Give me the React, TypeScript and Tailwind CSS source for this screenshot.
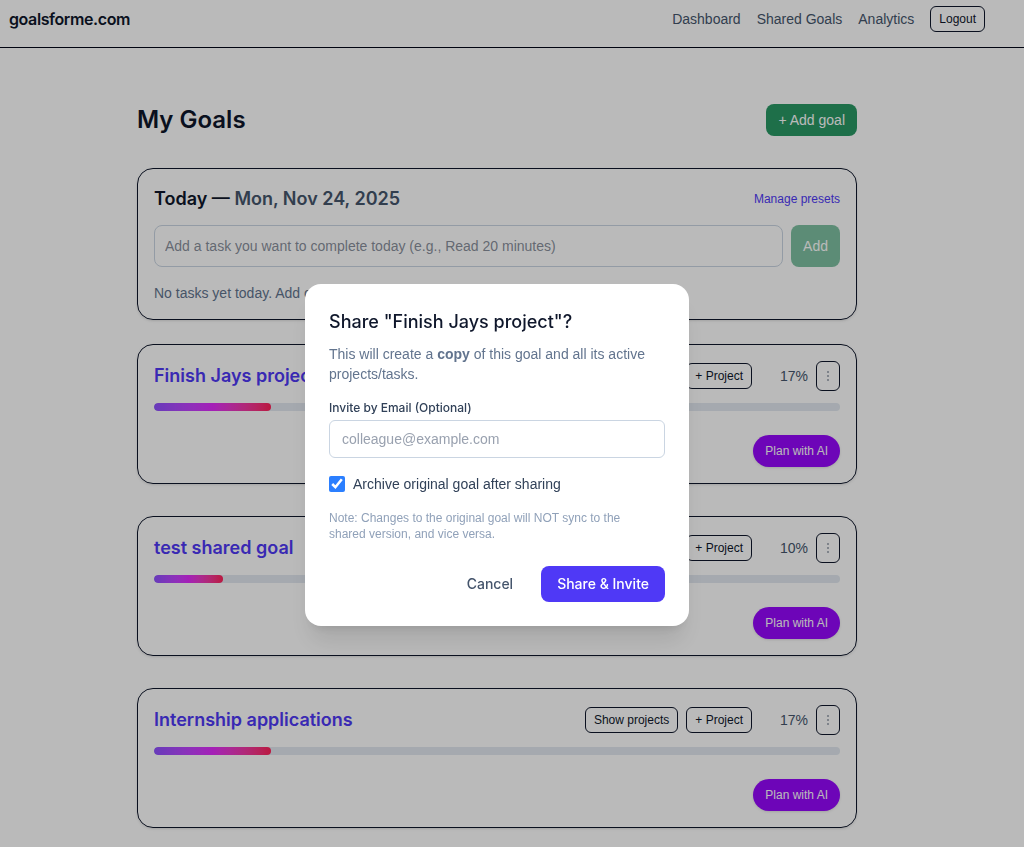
type Goal = { title: string; percent: number };

const goals: Goal[] = [
  { title: "Finish Jays project", percent: 17 },
  { title: "test shared goal", percent: 10 },
  { title: "Internship applications", percent: 17 },
];

function SiteHeader() {
  return (
    <header className="flex items-center justify-between border-b border-slate-950 pt-1.5 pr-[39px] pb-[15px] pl-[9px]">
      <a href="#" className="font-['Inter',sans-serif] text-base leading-6 font-semibold tracking-tight">
        goalsforme.com
      </a>
      <nav className="flex items-center gap-4 text-sm text-slate-600">
        <a href="#">Dashboard</a>
        <a href="#">Shared Goals</a>
        <a href="#">Analytics</a>
        <button type="button" className="rounded-md border border-slate-900 px-2 py-1 text-xs text-slate-900">
          Logout
        </button>
      </nav>
    </header>
  );
}

function TodayCard() {
  return (
    <section className="rounded-2xl border border-slate-900 p-4 shadow-sm">
      <div className="flex items-center justify-between">
        <h2 className="font-['Inter',sans-serif] text-lg leading-7 font-semibold">
          Today — <span className="text-slate-600">Mon, Nov 24, 2025</span>
        </h2>
        <button type="button" className="text-xs text-indigo-600">
          Manage presets
        </button>
      </div>
      <form className="mt-3 flex gap-2">
        <input
          type="text"
          aria-label="New task"
          placeholder="Add a task you want to complete today (e.g., Read 20 minutes)"
          className="h-[42px] min-w-0 flex-1 rounded-lg border border-slate-300 px-2.5 text-sm placeholder:text-gray-500/80"
        />
        <button type="button" disabled className="rounded-lg bg-[#2a9865] px-3 text-sm text-white opacity-60">
          Add
        </button>
      </form>
      <p className="mt-4 text-sm text-slate-500">No tasks yet today. Add one above to get started.</p>
    </section>
  );
}

function GoalCard({ title, percent }: Goal) {
  const outlined = "rounded-md border border-slate-900 px-2 py-1 text-xs text-slate-900";
  return (
    <section className="rounded-2xl border border-slate-900 p-4 shadow-sm">
      <div className="flex items-center justify-between gap-2">
        <h2 className="font-['Inter',sans-serif] text-lg leading-7 font-semibold text-indigo-600">
          <a href="#">{title}</a>
        </h2>
        <div className="flex items-center gap-2">
          <button type="button" className={outlined}>
            Show projects
          </button>
          <button type="button" className={outlined}>
            + Project
          </button>
          <span className="w-12 text-right text-sm text-slate-600">{percent}%</span>
          <button
            type="button"
            aria-label="Goal menu"
            className="flex h-[30px] w-6 items-center justify-center rounded-md border border-slate-900 text-slate-600"
          >
            <svg viewBox="0 0 2 10" className="h-2.5 w-0.5" fill="currentColor">
              <circle cx="1" cy="1" r="0.8" />
              <circle cx="1" cy="5" r="0.8" />
              <circle cx="1" cy="9" r="0.8" />
            </svg>
          </button>
        </div>
      </div>
      <div className="mt-3 h-2 overflow-hidden rounded-full bg-slate-200">
        <div
          className="h-full rounded-full bg-linear-to-r from-violet-500 via-fuchsia-500 to-rose-500"
          style={{ width: `${percent}%` }}
        />
      </div>
      <div className="mt-6 flex justify-end">
        <button type="button" className="rounded-full bg-[#9608fc] px-3 py-2 text-xs text-white shadow-sm">
          Plan with AI
        </button>
      </div>
    </section>
  );
}

function ShareDialog() {
  return (
    <div className="fixed inset-0 flex items-center justify-center bg-black/27 pt-[63px] pr-[30px]">
      <div
        role="dialog"
        aria-modal="true"
        aria-labelledby="share-title"
        className="w-full max-w-sm rounded-2xl bg-white p-6 shadow-xl"
      >
        <h2 id="share-title" className="font-['Inter',sans-serif] text-lg leading-7 font-medium">
          Share "Finish Jays project"?
        </h2>
        <p className="mt-2 text-sm text-slate-500">
          This will create a <strong>copy</strong> of this goal and all its active projects/tasks.
        </p>
        <label
          htmlFor="invite-email"
          className="mt-4 block font-['Inter',sans-serif] text-xs font-medium text-slate-700"
        >
          Invite by Email (Optional)
        </label>
        <input
          id="invite-email"
          type="email"
          placeholder="colleague@example.com"
          className="mt-1 h-[38px] w-full rounded-md border border-slate-300 px-3 text-sm placeholder:text-gray-400"
        />
        <label className="mt-4 flex items-center gap-2 text-sm text-slate-700">
          <input type="checkbox" defaultChecked className="size-4 accent-[#2b7fff]" />
          Archive original goal after sharing
        </label>
        <p className="mt-4 pr-6 text-xs text-slate-400">
          Note: Changes to the original goal will NOT sync to the shared version, and vice versa.
        </p>
        <div className="mt-6 flex justify-end gap-3 font-['Inter',sans-serif] text-sm font-medium">
          <button type="button" className="rounded-lg px-4 py-2 text-slate-600">
            Cancel
          </button>
          <button type="button" className="rounded-lg bg-indigo-600 px-4 py-2 text-white">
            Share &amp; Invite
          </button>
        </div>
      </div>
    </div>
  );
}

export default function App() {
  return (
    <div className="font-['Liberation_Sans',sans-serif] text-slate-900">
      <SiteHeader />
      <main className="pr-[30px]">
        <div className="mx-auto max-w-3xl px-6 pt-14 pb-5">
          <div className="flex items-center justify-between">
            <h1 className="font-['Inter',sans-serif] text-2xl font-semibold">My Goals</h1>
            <button type="button" className="rounded-lg bg-[#2a9865] px-3 py-1.5 text-sm text-white">
              + Add goal
            </button>
          </div>
          <div className="mt-8">
            <TodayCard />
          </div>
          <div className="mt-6 flex flex-col gap-8">
            {goals.map((goal) => (
              <GoalCard key={goal.title} {...goal} />
            ))}
          </div>
        </div>
      </main>
      <ShareDialog />
    </div>
  );
}
